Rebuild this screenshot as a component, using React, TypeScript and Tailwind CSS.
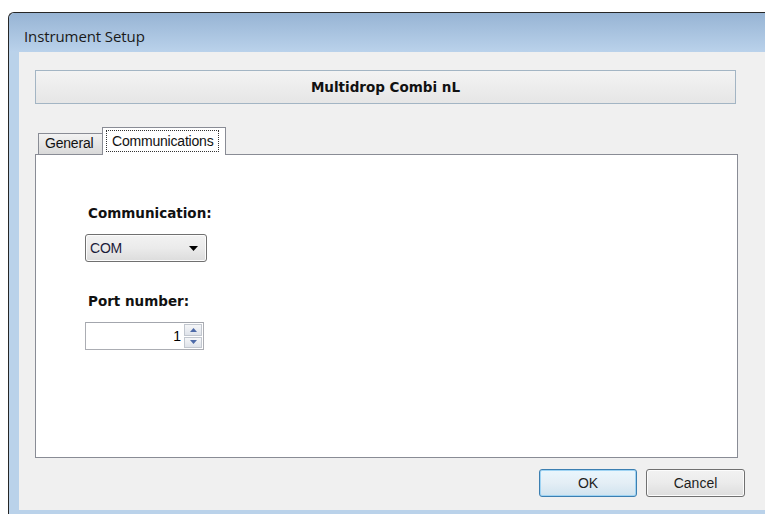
import React from "react";

const ui = "font-['Liberation_Sans',Arial,sans-serif]";
const tahoma = "font-['DejaVu_Sans',Verdana,sans-serif]";
const caption = "font-['Open_Sans','Noto_Sans',sans-serif]";

function SpinArrow({ up }: { up?: boolean }) {
  return (
    <svg width="7" height="4" viewBox="0 0 7 4" className="block">
      <path d={up ? "M0 4 L3.5 0 L7 4 Z" : "M0 0 L3.5 4 L7 0 Z"} fill="#4d6aa8" />
    </svg>
  );
}

function ComboBox() {
  return (
    <div className="flex h-[28px] w-[122px] items-center justify-between rounded-[3px] border border-[#707070] bg-gradient-to-b from-[#f2f2f2] via-[#ebebeb] to-[#dcdcdc] pl-[4px] pr-[8px] shadow-[inset_0_0_0_1px_#fcfcfc]">
      <span className={`${ui} text-[14px] tracking-[-0.2px] text-[#1b1b3a]`}>COM</span>
      <svg width="9" height="5" viewBox="0 0 9 5">
        <path d="M0 0 H9 L4.5 5 Z" fill="#000" />
      </svg>
    </div>
  );
}

function NumericUpDown() {
  return (
    <div className="flex h-[28px] w-[119px] items-center border border-[#abadb3] border-t-[#a3a6ad] bg-white">
      <span className={`${ui} flex-1 pr-[3px] text-right text-[14px] text-black`}>1</span>
      <div className="mr-[1px] flex h-[24px] w-[18px] flex-col gap-[1px]">
        <div className="flex flex-1 items-center justify-center border border-[#c2c7cf] bg-gradient-to-b from-[#f5f6f8] to-[#dfe3ea]">
          <SpinArrow up />
        </div>
        <div className="flex flex-1 items-center justify-center border border-[#c2c7cf] bg-gradient-to-b from-[#f5f6f8] to-[#dfe3ea]">
          <SpinArrow />
        </div>
      </div>
    </div>
  );
}

function Button({ label, focused, className = "" }: { label: string; focused?: boolean; className?: string }) {
  return (
    <button
      className={`${ui} ${className} flex h-[28px] items-center justify-center rounded-[3px] border text-[14px] text-[#1e1e1e] ${
        focused
          ? "border-[#3c7fb1] bg-gradient-to-b from-[#eaf6fd] via-[#e4eef5] to-[#d0e3ef] shadow-[inset_0_0_0_1px_#9ed3f3]"
          : "border-[#707070] bg-gradient-to-b from-[#f2f2f2] via-[#ebebeb] to-[#dddddd] shadow-[inset_0_0_0_1px_#fcfcfc]"
      }`}
    >
      {label}
    </button>
  );
}

export default function App() {
  return (
    <div className="h-[514px] w-[765px] overflow-hidden bg-white pl-[8px] pt-[12px]">
      <div className="flex h-[502px] w-[780px] flex-col rounded-tl-[6px] border-l border-t border-[#262626] bg-[#bad2ea]">
        {/* title bar */}
        <div className="flex h-[39px] items-start rounded-tl-[6px] bg-gradient-to-b from-[#97b4d4] to-[#bad2eb] pl-[15px] pt-[13px]">
          <span className={`${caption} text-[15px] leading-[20px] tracking-[-0.1px] text-[#1a1a1a]`}>Instrument Setup</span>
        </div>

        {/* client area */}
        <div className="mb-[4px] ml-[10px] flex flex-1 flex-col bg-[#f0f0f0] pl-[16px]">
          <div className="mt-[18px] flex h-[34px] w-[701px] items-center justify-center border border-[#a3b5c4] bg-gradient-to-b from-[#f3f3f3] to-[#e6e6e6]">
            <span className={`${tahoma} text-[13.5px] font-bold text-[#111]`}>Multidrop Combi nL</span>
          </div>

          {/* tabs */}
          <div className="mt-[22px] flex h-[28px] items-end pl-[3px]">
            <div className="mb-[-1px] flex h-[22px] w-[64px] items-center border border-r-0 border-[#898c95] bg-gradient-to-b from-[#f3f3f3] to-[#d9d9d9] pb-[2px] pl-[6px]">
              <span className={`${ui} text-[14px] leading-[18px] tracking-[-0.2px] text-[#111]`}>General</span>
            </div>
            <div className="relative z-10 mb-[-1px] flex h-[28px] w-[124px] items-start border border-b-0 border-[#898c95] bg-white pl-[3px] pt-[2px]">
              <span className={`${ui} border border-dotted border-[#333] px-[5px] text-[14px] leading-[20px] tracking-[-0.2px] text-[#111]`}>
                Communications
              </span>
            </div>
          </div>

          <div className="flex h-[304px] w-[703px] flex-col border border-[#898c95] bg-white pl-[49px] pt-[50px]">
            <span className={`${tahoma} ml-[3px] text-[13.5px] font-bold leading-[16px] text-[#111]`}>Communication:</span>
            <div className="mt-[13px]">
              <ComboBox />
            </div>
            <span className={`${tahoma} ml-[3px] mt-[31px] text-[13.5px] font-bold leading-[16px] text-[#111]`}>Port number:</span>
            <div className="mt-[13px]">
              <NumericUpDown />
            </div>
          </div>

          <div className="mt-[11px] flex w-[710px] justify-end gap-[9px]">
            <Button label="OK" focused className="w-[98px]" />
            <Button label="Cancel" className="w-[99px]" />
          </div>
        </div>
      </div>
    </div>
  );
}
